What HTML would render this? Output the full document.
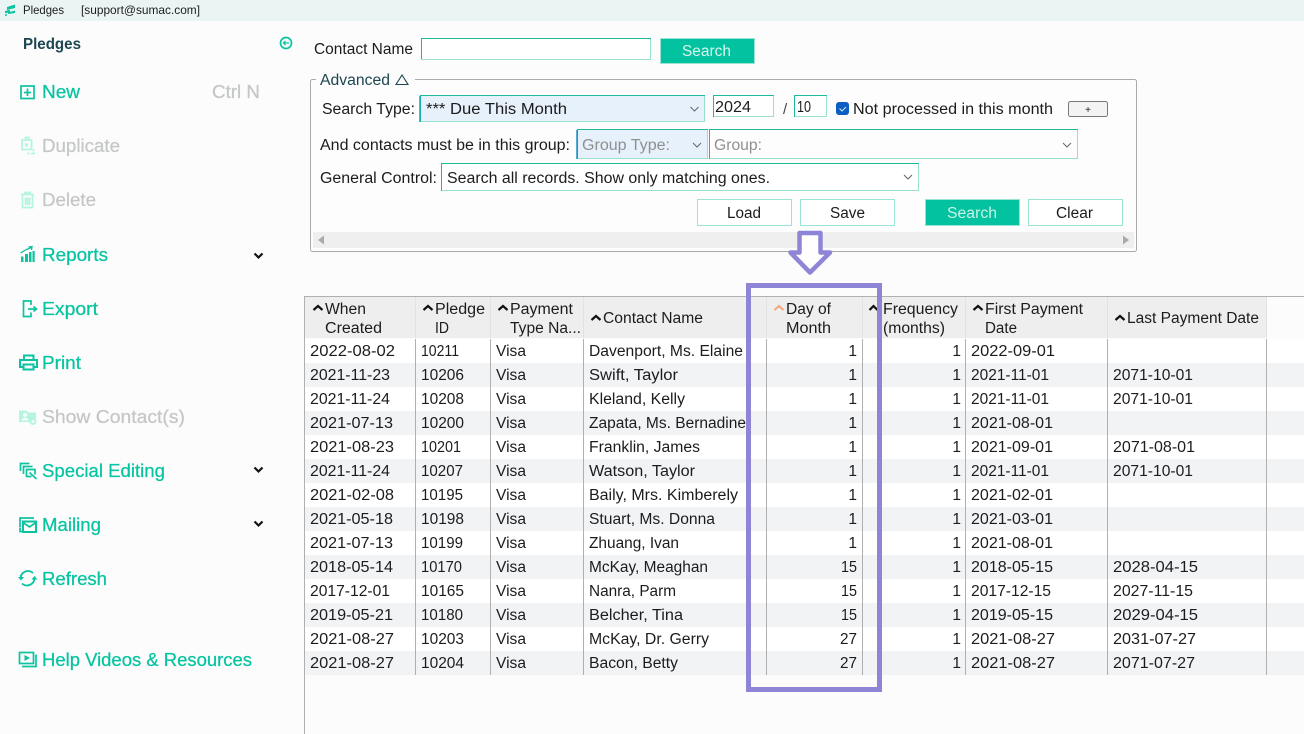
<!DOCTYPE html>
<html lang="en"><head><meta charset="utf-8"><title>Pledges</title>
<style>
html,body{margin:0;padding:0;background:#fcfcfc;overflow:hidden}
svg{display:block}
text{font-family:"Liberation Sans",sans-serif;font-size:15.5px;fill:#1c1c1c;white-space:pre}
.s text{font-size:18.5px;fill:#06c4a1;stroke:#06c4a1;stroke-width:.25px}
.s text.d{fill:#c4c6c8;stroke:#c4c6c8}
.t{fill:none;stroke:#0cc3a0;stroke-width:1.7}
.td{fill:none;stroke:#b3f5dd;stroke-width:1.8}
.c{fill:none;stroke:#111;stroke-width:2.2}
.ch{fill:none;stroke:#666;stroke-width:1}
.l{stroke:#b0b0b0;stroke-width:1}
</style></head><body>
<svg width="1304" height="734" viewBox="0 0 1304 734" xmlns="http://www.w3.org/2000/svg">
<rect width="1304" height="734" fill="#fcfcfc"/>
<!-- title bar -->
<rect width="1304" height="21" fill="#eaf4f3"/>
<path d="M7 7l8-2.500v3.500l-8 2zM5 11l5-1.300v2.500l-5 1zM8 12.500l7-2v2.500l-7 1zM5 14.500l2-.5v1.500l-2 .5z" fill="#0cc3a0"/>
<text x="23" y="14" textLength="41" lengthAdjust="spacingAndGlyphs" style="font-size:12px">Pledges</text>
<text x="81" y="14" textLength="119" lengthAdjust="spacingAndGlyphs" style="font-size:12px">[support@sumac.com]</text>
<!-- sidebar -->
<text x="23" y="49" textLength="58" lengthAdjust="spacingAndGlyphs" style="font-weight:bold;fill:#1d4650">Pledges</text>
<circle cx="286" cy="43" r="5.500" class="t"/><path d="M283 43h6M285.500 41l-2 2 2 2" class="t" style="stroke-width:1.300"/>
<g class="s">
<text x="42" y="98" textLength="38" lengthAdjust="spacingAndGlyphs">New</text>
<text x="212" y="98" textLength="48" lengthAdjust="spacingAndGlyphs" class="d">Ctrl N</text>
<text x="42" y="152" textLength="78" lengthAdjust="spacingAndGlyphs" class="d">Duplicate</text>
<text x="42" y="206" textLength="54" lengthAdjust="spacingAndGlyphs" class="d">Delete</text>
<text x="42" y="261" textLength="66" lengthAdjust="spacingAndGlyphs">Reports</text>
<text x="42" y="315" textLength="56" lengthAdjust="spacingAndGlyphs">Export</text>
<text x="42" y="369" textLength="39" lengthAdjust="spacingAndGlyphs">Print</text>
<text x="42" y="423" textLength="143" lengthAdjust="spacingAndGlyphs" class="d">Show Contact(s)</text>
<text x="42" y="477" textLength="123" lengthAdjust="spacingAndGlyphs">Special Editing</text>
<text x="42" y="531" textLength="59" lengthAdjust="spacingAndGlyphs">Mailing</text>
<text x="42" y="585" textLength="65" lengthAdjust="spacingAndGlyphs">Refresh</text>
<text x="42" y="666" textLength="210" lengthAdjust="spacingAndGlyphs">Help Videos &amp; Resources</text>
</g>
<!-- sidebar icons -->
<rect x="21" y="86" width="13" height="12.500" class="t"/><path d="M27.500 88.500v7.500M24 92.500h7" class="t"/>
<path d="M25.500 139v-1.500h3.500v1.500M22 140h9.500v9.500H22zM27 153.500h2.500M33.500 149.500v2M31 153.500h3v-1" class="td"/><circle cx="26.500" cy="145" r="1.700" fill="#b3f5dd"/>
<path d="M21 194.500h13M25 194.500v-2h5v2M22.500 194.500v13h10v-13M25.500 197.500v7.500M27.500 197.500v7.500M29.500 197.500v7.500" class="td"/>
<path d="M21 256.500h2.500v5.500H21zM25 254h3v8h-3zM29 252h2.500v10H29zM32.500 251h2.200v11h-2.200z" fill="#0cc3a0"/><path d="M20.500 253l6-3.500 5-2M28.500 247l3.500-.5-.5 3.500" class="t" style="stroke-width:1.300"/>
<path d="M31 305v-4h-7.500v15.500H31v-4M28 309h8M33.500 306.500l3 2.500-3 2.500" class="t"/>
<path d="M24 360v-4.500h9.500v4.500M23 367h-3v-7h17v7h-3M23.500 364.500h10v5h-10z" class="t" style="stroke-width:2"/>
<path d="M19 410.500h7.500l1.500 2h8v6h-3l-2 3.500H19z" fill="#b3f5dd"/><circle cx="25" cy="415" r="2" fill="#fcfcfc"/><path d="M21.500 420.500a3.500 2.800 0 0 1 7 0z" fill="#fcfcfc"/><circle cx="33" cy="421.500" r="2.500" fill="#fcfcfc" stroke="#b3f5dd" stroke-width="2"/>
<path d="M20.500 471v-7.500h9M23.500 474v-7.500h9" class="t"/><path d="M26.500 477v-7.500h8.500v5M26.500 476.500h5M29.500 472.500l7 6.500" class="t"/>
<path d="M20 527v-9h14M22 531.500h-2v-4" class="t"/><rect x="23" y="521.500" width="13" height="10.500" class="t" style="stroke-width:2"/><path d="M23 522.500l6.500 4.500 6.500-4.500" class="t"/>
<path d="M20.500 578a7.500 7.500 0 0 1 12.500-5M34.500 578.500a7.500 7.500 0 0 1-12.500 5" class="t" style="stroke-width:1.800"/><path d="M18 577h6l-3 3.500zM31.500 579.500h6l-3-3.500z" fill="#0cc3a0"/>
<rect x="19.500" y="652.500" width="14" height="11" class="t"/><path d="M24.500 655l5.500 3-5.500 3z" fill="#0cc3a0"/><path d="M36 654.500v12H22" class="t"/>
<path d="M254.500 253.500l4 4 4-4M254.500 467.500l4 4 4-4M254.500 521.500l4 4 4-4" class="c"/>
<!-- contact search -->
<text x="314" y="54" textLength="99" lengthAdjust="spacingAndGlyphs">Contact Name</text>
<rect x="421.500" y="38.500" width="229" height="21" fill="#fff" stroke="#99e0cf"/><path d="M421.500 59V38.500H651" fill="none" stroke="#1db99a"/>
<rect x="660.500" y="38.500" width="94" height="25" fill="#03c2a0" stroke="#9de3d3"/>
<text x="682" y="56" textLength="49" lengthAdjust="spacingAndGlyphs" style="fill:#d8f6ee">Search</text>
<!-- advanced panel -->
<rect x="310.500" y="79.500" width="826" height="172" rx="2" fill="#fdfdfd" stroke="#aaa"/>
<rect x="316" y="76" width="99" height="8" fill="#fcfcfc"/>
<text x="320" y="85" textLength="70" lengthAdjust="spacingAndGlyphs" style="fill:#1d4650">Advanced</text>
<path d="M396 84.500h12L402 75z" fill="none" stroke="#1d4650" stroke-width="1.100"/>
<text x="322" y="114" textLength="93" lengthAdjust="spacingAndGlyphs">Search Type:</text>
<rect x="420.500" y="95.500" width="284" height="26" fill="#e6f1fb" stroke="#99e0cf"/><path d="M420.500 122V95.500H705" fill="none" stroke="#1db99a"/><path d="M420 96v26" stroke="#1aa6b0" stroke-width="1.500"/>
<text x="426" y="114" textLength="141" lengthAdjust="spacingAndGlyphs">*** Due This Month</text>
<path d="M690.500 107l4 4 4-4" class="ch"/>
<rect x="713.500" y="95.500" width="60" height="21" fill="#fff" stroke="#99e0cf"/><path d="M713.500 117V95.500H774" fill="none" stroke="#1db99a"/>
<text x="715" y="112" textLength="36" lengthAdjust="spacingAndGlyphs">2024</text>
<text x="783" y="114" style="font-size:15px;fill:#444">/</text>
<rect x="794.500" y="95.500" width="32" height="21" fill="#fff" stroke="#99e0cf"/><path d="M794.500 117V95.500H827" fill="none" stroke="#1db99a"/>
<text x="797" y="112" textLength="14" lengthAdjust="spacingAndGlyphs">10</text>
<rect x="836" y="102" width="13" height="13" rx="3" fill="#0a5fc0"/><path d="M839.500 108.500l2.500 2.500 4-4" fill="none" stroke="#cfe4fa" stroke-width="1"/>
<text x="853" y="114" textLength="200" lengthAdjust="spacingAndGlyphs">Not processed in this month</text>
<rect x="1068.500" y="101.500" width="39" height="15" rx="2" fill="#f3f3f3" stroke="#777"/>
<text x="1088" y="113" text-anchor="middle" style="font-size:10px">+</text>
<text x="320" y="150" textLength="250" lengthAdjust="spacingAndGlyphs">And contacts must be in this group:</text>
<rect x="577.500" y="129.500" width="130" height="29" fill="#e6f1fb" stroke="#99e0cf"/><path d="M577.500 159V129.500H708" fill="none" stroke="#1db99a"/><path d="M577 130v29" stroke="#1a90c8" stroke-width="1.500"/>
<text x="582" y="150" textLength="88" lengthAdjust="spacingAndGlyphs" style="fill:#909090">Group Type:</text>
<path d="M693 143l4 4 4-4" class="ch"/>
<rect x="709.500" y="129.500" width="368" height="29" fill="#fdfdfd" stroke="#99e0cf"/><path d="M709.500 159V129.500H1078" fill="none" stroke="#1db99a"/>
<text x="714" y="150" textLength="48" lengthAdjust="spacingAndGlyphs" style="fill:#909090">Group:</text>
<path d="M1063 143l4 4 4-4" class="ch"/>
<text x="320" y="183" textLength="117" lengthAdjust="spacingAndGlyphs">General Control:</text>
<rect x="441.500" y="163.500" width="477" height="27" fill="#fff" stroke="#99e0cf"/><path d="M441.500 191V163.500H919" fill="none" stroke="#1db99a"/>
<text x="447" y="183" textLength="323" lengthAdjust="spacingAndGlyphs">Search all records. Show only matching ones.</text>
<path d="M904 175l4 4 4-4" class="ch"/>
<rect x="697.500" y="199.500" width="94" height="26" fill="#fff" stroke="#9de3d3"/>
<text x="727" y="218" textLength="34" lengthAdjust="spacingAndGlyphs">Load</text>
<rect x="800.500" y="199.500" width="94" height="26" fill="#fff" stroke="#9de3d3"/>
<text x="830" y="218" textLength="35" lengthAdjust="spacingAndGlyphs">Save</text>
<rect x="925.500" y="199.500" width="94" height="26" fill="#03c2a0" stroke="#9de3d3"/>
<text x="947" y="218" textLength="50" lengthAdjust="spacingAndGlyphs" style="fill:#c9f2e7">Search</text>
<rect x="1028.500" y="199.500" width="94" height="26" fill="#fff" stroke="#9de3d3"/>
<text x="1056" y="218" textLength="37" lengthAdjust="spacingAndGlyphs">Clear</text>
<rect x="313" y="232" width="821" height="16" fill="#efefef"/>
<path d="M324 235.500v9l-6-4.500z" fill="#aaa"/><path d="M1123 235.500v9l6-4.500z" fill="#aaa"/>
<!-- table frame -->
<path d="M304.500 296v438" class="l"/><path d="M304 296.500h1000" class="l"/>
<rect x="305" y="297" width="961" height="41" fill="#eeeeee"/>
<rect x="305" y="339" width="999" height="336" fill="#ffffff"/>
<rect x="305" y="363" width="999" height="24" fill="#f2f3f5"/><rect x="305" y="411" width="999" height="24" fill="#f2f3f5"/><rect x="305" y="459" width="999" height="24" fill="#f2f3f5"/><rect x="305" y="507" width="999" height="24" fill="#f2f3f5"/><rect x="305" y="555" width="999" height="24" fill="#f2f3f5"/><rect x="305" y="603" width="999" height="24" fill="#f2f3f5"/><rect x="305" y="651" width="999" height="24" fill="#f2f3f5"/>
<path d="M415.500 297v41M490.500 297v41M583.500 297v41M766.500 297v41M862.500 297v41M965.500 297v41M1107.500 297v41M1266.500 297v41" stroke="#e2e2e2"/>
<path d="M415.500 339v336M490.500 339v336M583.500 339v336M766.500 339v336M862.500 339v336M965.500 339v336M1107.500 339v336M1266.500 339v336" class="l"/>
<!-- headers -->
<g fill="none">
<path d="M313.500 310l4.500-4 4.500 4M423.500 310l4.500-4 4.500 4M498.500 310l4.500-4 4.500 4M591.500 320l4.500-4 4.500 4M869.500 310l4-4 4 4M973.500 310l4.500-4 4.500 4M1115.500 320l4.500-4 4.500 4" class="c"/>
<path d="M774.500 310l4.500-4 4.500 4" stroke="#f0a87a" stroke-width="2"/>
</g>
<text x="325" y="314" textLength="41" lengthAdjust="spacingAndGlyphs">When</text><text x="325" y="333" textLength="57" lengthAdjust="spacingAndGlyphs">Created</text>
<text x="435" y="314" textLength="50" lengthAdjust="spacingAndGlyphs">Pledge</text><text x="435" y="333" textLength="14" lengthAdjust="spacingAndGlyphs">ID</text>
<text x="510" y="314" textLength="63" lengthAdjust="spacingAndGlyphs">Payment</text><text x="510" y="333" textLength="71" lengthAdjust="spacingAndGlyphs">Type Na...</text>
<text x="603" y="323" textLength="100" lengthAdjust="spacingAndGlyphs">Contact Name</text>
<text x="786" y="314" textLength="45" lengthAdjust="spacingAndGlyphs">Day of</text><text x="786" y="333" textLength="45" lengthAdjust="spacingAndGlyphs">Month</text>
<text x="883" y="314" textLength="75" lengthAdjust="spacingAndGlyphs">Frequency</text><text x="883" y="333" textLength="62" lengthAdjust="spacingAndGlyphs">(months)</text>
<text x="985" y="314" textLength="98" lengthAdjust="spacingAndGlyphs">First Payment</text><text x="985" y="333" textLength="32" lengthAdjust="spacingAndGlyphs">Date</text>
<text x="1127" y="323" textLength="132" lengthAdjust="spacingAndGlyphs">Last Payment Date</text>
<!-- rows -->
<g transform="translate(0,356)"><text x="310" textLength="85" lengthAdjust="spacingAndGlyphs">2022-08-02</text><text x="421" textLength="38" lengthAdjust="spacingAndGlyphs">10211</text><text x="496" textLength="30" lengthAdjust="spacingAndGlyphs">Visa</text><text x="589" textLength="154" lengthAdjust="spacingAndGlyphs">Davenport, Ms. Elaine</text><text x="857" text-anchor="end">1</text><text x="961" text-anchor="end">1</text><text x="971" textLength="84" lengthAdjust="spacingAndGlyphs">2022-09-01</text></g>
<g transform="translate(0,380)"><text x="310" textLength="80" lengthAdjust="spacingAndGlyphs">2021-11-23</text><text x="421" textLength="43" lengthAdjust="spacingAndGlyphs">10206</text><text x="496" textLength="30" lengthAdjust="spacingAndGlyphs">Visa</text><text x="589" textLength="89" lengthAdjust="spacingAndGlyphs">Swift, Taylor</text><text x="857" text-anchor="end">1</text><text x="961" text-anchor="end">1</text><text x="971" textLength="78" lengthAdjust="spacingAndGlyphs">2021-11-01</text><text x="1113" textLength="80" lengthAdjust="spacingAndGlyphs">2071-10-01</text></g>
<g transform="translate(0,404)"><text x="310" textLength="80" lengthAdjust="spacingAndGlyphs">2021-11-24</text><text x="421" textLength="43" lengthAdjust="spacingAndGlyphs">10208</text><text x="496" textLength="30" lengthAdjust="spacingAndGlyphs">Visa</text><text x="589" textLength="96" lengthAdjust="spacingAndGlyphs">Kleland, Kelly</text><text x="857" text-anchor="end">1</text><text x="961" text-anchor="end">1</text><text x="971" textLength="78" lengthAdjust="spacingAndGlyphs">2021-11-01</text><text x="1113" textLength="80" lengthAdjust="spacingAndGlyphs">2071-10-01</text></g>
<g transform="translate(0,428)"><text x="310" textLength="83" lengthAdjust="spacingAndGlyphs">2021-07-13</text><text x="421" textLength="43" lengthAdjust="spacingAndGlyphs">10200</text><text x="496" textLength="30" lengthAdjust="spacingAndGlyphs">Visa</text><text x="589" textLength="157" lengthAdjust="spacingAndGlyphs">Zapata, Ms. Bernadine</text><text x="857" text-anchor="end">1</text><text x="961" text-anchor="end">1</text><text x="971" textLength="82" lengthAdjust="spacingAndGlyphs">2021-08-01</text></g>
<g transform="translate(0,452)"><text x="310" textLength="84" lengthAdjust="spacingAndGlyphs">2021-08-23</text><text x="421" textLength="40" lengthAdjust="spacingAndGlyphs">10201</text><text x="496" textLength="30" lengthAdjust="spacingAndGlyphs">Visa</text><text x="589" textLength="111" lengthAdjust="spacingAndGlyphs">Franklin, James</text><text x="857" text-anchor="end">1</text><text x="961" text-anchor="end">1</text><text x="971" textLength="82" lengthAdjust="spacingAndGlyphs">2021-09-01</text><text x="1113" textLength="82" lengthAdjust="spacingAndGlyphs">2071-08-01</text></g>
<g transform="translate(0,476)"><text x="310" textLength="80" lengthAdjust="spacingAndGlyphs">2021-11-24</text><text x="421" textLength="42" lengthAdjust="spacingAndGlyphs">10207</text><text x="496" textLength="30" lengthAdjust="spacingAndGlyphs">Visa</text><text x="589" textLength="106" lengthAdjust="spacingAndGlyphs">Watson, Taylor</text><text x="857" text-anchor="end">1</text><text x="961" text-anchor="end">1</text><text x="971" textLength="78" lengthAdjust="spacingAndGlyphs">2021-11-01</text><text x="1113" textLength="80" lengthAdjust="spacingAndGlyphs">2071-10-01</text></g>
<g transform="translate(0,500)"><text x="310" textLength="84" lengthAdjust="spacingAndGlyphs">2021-02-08</text><text x="421" textLength="42" lengthAdjust="spacingAndGlyphs">10195</text><text x="496" textLength="30" lengthAdjust="spacingAndGlyphs">Visa</text><text x="589" textLength="149" lengthAdjust="spacingAndGlyphs">Baily, Mrs. Kimberely</text><text x="857" text-anchor="end">1</text><text x="961" text-anchor="end">1</text><text x="971" textLength="82" lengthAdjust="spacingAndGlyphs">2021-02-01</text></g>
<g transform="translate(0,524)"><text x="310" textLength="83" lengthAdjust="spacingAndGlyphs">2021-05-18</text><text x="421" textLength="43" lengthAdjust="spacingAndGlyphs">10198</text><text x="496" textLength="30" lengthAdjust="spacingAndGlyphs">Visa</text><text x="589" textLength="126" lengthAdjust="spacingAndGlyphs">Stuart, Ms. Donna</text><text x="857" text-anchor="end">1</text><text x="961" text-anchor="end">1</text><text x="971" textLength="82" lengthAdjust="spacingAndGlyphs">2021-03-01</text></g>
<g transform="translate(0,548)"><text x="310" textLength="83" lengthAdjust="spacingAndGlyphs">2021-07-13</text><text x="421" textLength="42" lengthAdjust="spacingAndGlyphs">10199</text><text x="496" textLength="30" lengthAdjust="spacingAndGlyphs">Visa</text><text x="589" textLength="90" lengthAdjust="spacingAndGlyphs">Zhuang, Ivan</text><text x="857" text-anchor="end">1</text><text x="961" text-anchor="end">1</text><text x="971" textLength="82" lengthAdjust="spacingAndGlyphs">2021-08-01</text></g>
<g transform="translate(0,572)"><text x="310" textLength="83" lengthAdjust="spacingAndGlyphs">2018-05-14</text><text x="421" textLength="41" lengthAdjust="spacingAndGlyphs">10170</text><text x="496" textLength="30" lengthAdjust="spacingAndGlyphs">Visa</text><text x="589" textLength="119" lengthAdjust="spacingAndGlyphs">McKay, Meaghan</text><text x="857" text-anchor="end" textLength="16" lengthAdjust="spacingAndGlyphs">15</text><text x="961" text-anchor="end">1</text><text x="971" textLength="82" lengthAdjust="spacingAndGlyphs">2018-05-15</text><text x="1113" textLength="85" lengthAdjust="spacingAndGlyphs">2028-04-15</text></g>
<g transform="translate(0,596)"><text x="310" textLength="80" lengthAdjust="spacingAndGlyphs">2017-12-01</text><text x="421" textLength="43" lengthAdjust="spacingAndGlyphs">10165</text><text x="496" textLength="30" lengthAdjust="spacingAndGlyphs">Visa</text><text x="589" textLength="87" lengthAdjust="spacingAndGlyphs">Nanra, Parm</text><text x="857" text-anchor="end" textLength="16" lengthAdjust="spacingAndGlyphs">15</text><text x="961" text-anchor="end">1</text><text x="971" textLength="80" lengthAdjust="spacingAndGlyphs">2017-12-15</text><text x="1113" textLength="80" lengthAdjust="spacingAndGlyphs">2027-11-15</text></g>
<g transform="translate(0,620)"><text x="310" textLength="83" lengthAdjust="spacingAndGlyphs">2019-05-21</text><text x="421" textLength="42" lengthAdjust="spacingAndGlyphs">10180</text><text x="496" textLength="30" lengthAdjust="spacingAndGlyphs">Visa</text><text x="589" textLength="94" lengthAdjust="spacingAndGlyphs">Belcher, Tina</text><text x="857" text-anchor="end" textLength="16" lengthAdjust="spacingAndGlyphs">15</text><text x="961" text-anchor="end">1</text><text x="971" textLength="82" lengthAdjust="spacingAndGlyphs">2019-05-15</text><text x="1113" textLength="85" lengthAdjust="spacingAndGlyphs">2029-04-15</text></g>
<g transform="translate(0,644)"><text x="310" textLength="84" lengthAdjust="spacingAndGlyphs">2021-08-27</text><text x="421" textLength="43" lengthAdjust="spacingAndGlyphs">10203</text><text x="496" textLength="30" lengthAdjust="spacingAndGlyphs">Visa</text><text x="589" textLength="120" lengthAdjust="spacingAndGlyphs">McKay, Dr. Gerry</text><text x="857" text-anchor="end" textLength="17" lengthAdjust="spacingAndGlyphs">27</text><text x="961" text-anchor="end">1</text><text x="971" textLength="84" lengthAdjust="spacingAndGlyphs">2021-08-27</text><text x="1113" textLength="83" lengthAdjust="spacingAndGlyphs">2031-07-27</text></g>
<g transform="translate(0,668)"><text x="310" textLength="84" lengthAdjust="spacingAndGlyphs">2021-08-27</text><text x="421" textLength="43" lengthAdjust="spacingAndGlyphs">10204</text><text x="496" textLength="30" lengthAdjust="spacingAndGlyphs">Visa</text><text x="589" textLength="89" lengthAdjust="spacingAndGlyphs">Bacon, Betty</text><text x="857" text-anchor="end" textLength="17" lengthAdjust="spacingAndGlyphs">27</text><text x="961" text-anchor="end">1</text><text x="971" textLength="84" lengthAdjust="spacingAndGlyphs">2021-08-27</text><text x="1113" textLength="82" lengthAdjust="spacingAndGlyphs">2071-07-27</text></g>
<!-- annotation -->
<rect x="748.500" y="285.500" width="131" height="404" fill="none" stroke="#8e85d6" stroke-width="5"/>
<path d="M799.500 233h21v19.500h9.500L810 272.500 790.500 252.500h9z" fill="#fff" stroke="#8e85d6" stroke-width="4.500" stroke-linejoin="round"/>
</svg>
</body></html>
